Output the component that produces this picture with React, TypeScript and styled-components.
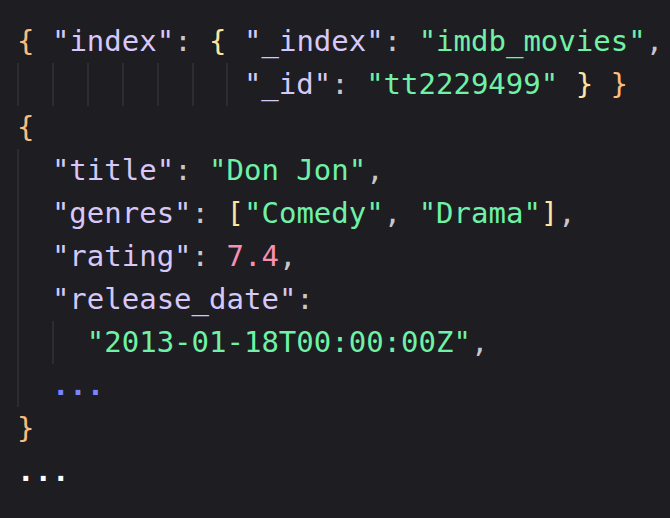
import React from "react";
import styled, { createGlobalStyle } from "styled-components";

const Global = createGlobalStyle`
  html, body { margin: 0; padding: 0; background: #1e1d22; }
`;

const Editor = styled.div`
  box-sizing: border-box;
  width: 670px;
  height: 518px;
  background: #1e1d22;
  padding: 20px 0 0 17px;
  font-family: "DejaVu Sans Mono", "Liberation Mono", monospace;
  font-size: 29px;
  line-height: 43px;
  color: #c4c4c8;
  overflow: hidden;
  -webkit-font-smoothing: antialiased;
`;

const Line = styled.div`
  display: flex;
  height: 43px;
`;

const Guide = styled.span<{ $cols?: number }>`
  flex: none;
  box-sizing: border-box;
  width: ${(p) => p.$cols ?? 2}ch;
  border-left: 2px solid #2d2c32;
`;

const Code = styled.span`
  white-space: pre;
`;

const Key = styled.span`
  color: #d6c8f8;
`;

const Str = styled.span`
  color: #6ff2a7;
`;

const Num = styled.span`
  color: #f78fb4;
`;

const Punc = styled.span`
  color: #c8c8cb;
`;

const Brace = styled.span<{ $level: number }>`
  color: ${(p) => (p.$level === 0 ? "#fbbd7e" : "#fde49f")};
`;

const Ellipsis = styled.span<{ $muted?: boolean }>`
  color: ${(p) => (p.$muted ? "#7b84ff" : "#ffffff")};
  font-weight: bold;
`;

const guides = (n: number) =>
  Array.from({ length: n }, (_, i) => <Guide key={i} />);

export default function App() {
  return (
    <>
      <Global />
      <Editor>
        <Line>
          <Code>
            <Brace $level={0}>{"{"}</Brace> <Key>"index"</Key>
            <Punc>:</Punc> <Brace $level={1}>{"{"}</Brace> <Key>"_index"</Key>
            <Punc>:</Punc> <Str>"imdb_movies"</Str>
            <Punc>,</Punc>
          </Code>
        </Line>
        <Line>
          {guides(6)}
          <Guide $cols={1} />
          <Code>
            <Key>"_id"</Key>
            <Punc>:</Punc> <Str>"tt2229499"</Str>{" "}
            <Brace $level={1}>{"}"}</Brace> <Brace $level={0}>{"}"}</Brace>
          </Code>
        </Line>
        <Line>
          <Code>
            <Brace $level={0}>{"{"}</Brace>
          </Code>
        </Line>
        <Line>
          {guides(1)}
          <Code>
            <Key>"title"</Key>
            <Punc>:</Punc> <Str>"Don Jon"</Str>
            <Punc>,</Punc>
          </Code>
        </Line>
        <Line>
          {guides(1)}
          <Code>
            <Key>"genres"</Key>
            <Punc>:</Punc> <Brace $level={1}>[</Brace>
            <Str>"Comedy"</Str>
            <Punc>,</Punc> <Str>"Drama"</Str>
            <Brace $level={1}>]</Brace>
            <Punc>,</Punc>
          </Code>
        </Line>
        <Line>
          {guides(1)}
          <Code>
            <Key>"rating"</Key>
            <Punc>:</Punc> <Num>7.4</Num>
            <Punc>,</Punc>
          </Code>
        </Line>
        <Line>
          {guides(1)}
          <Code>
            <Key>"release_date"</Key>
            <Punc>:</Punc>
          </Code>
        </Line>
        <Line>
          {guides(2)}
          <Code>
            <Str>"2013-01-18T00:00:00Z"</Str>
            <Punc>,</Punc>
          </Code>
        </Line>
        <Line>
          {guides(1)}
          <Code>
            <Ellipsis $muted>...</Ellipsis>
          </Code>
        </Line>
        <Line>
          <Code>
            <Brace $level={0}>{"}"}</Brace>
          </Code>
        </Line>
        <Line>
          <Code>
            <Ellipsis>...</Ellipsis>
          </Code>
        </Line>
      </Editor>
    </>
  );
}
